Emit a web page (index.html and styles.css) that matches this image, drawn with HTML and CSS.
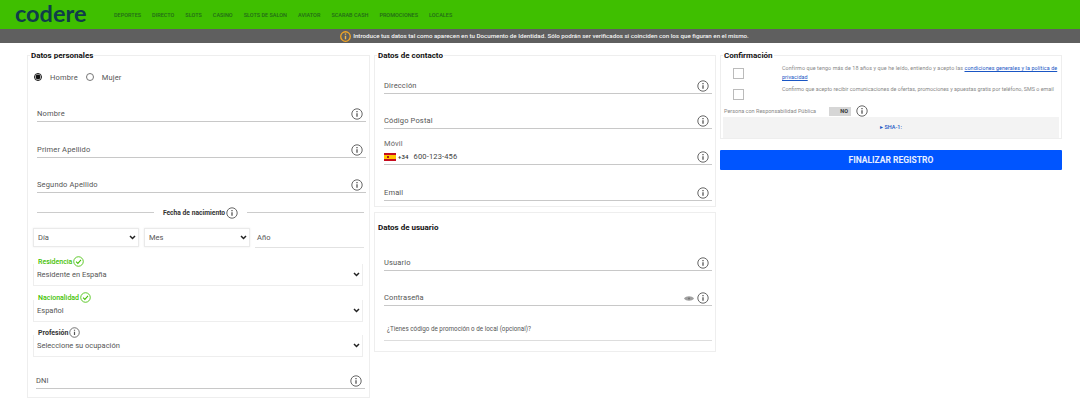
FILE: index.html
```html
<!DOCTYPE html>
<html>
<head>
  <title>Registro Codere</title>
  <link rel="stylesheet" href="styles.css">
</head>
<body>
  <svg class="icon-defs" width="0" height="0">
    <symbol id="info" viewBox="0 0 12 12">
      <circle cx="6" cy="6" r="5.2" fill="none" stroke="currentColor" stroke-width="0.9"/>
      <path d="M6 3v1.2M6 5.2v3.6" fill="none" stroke="currentColor" stroke-width="1.3"/>
    </symbol>
    <symbol id="check" viewBox="0 0 12 12">
      <circle cx="6" cy="6" r="5.2" fill="none" stroke="currentColor" stroke-width="0.9"/>
      <path d="M3.4 6.2l1.9 1.9 3.4-3.8" fill="none" stroke="currentColor" stroke-width="1.1"/>
    </symbol>
  </svg>

  <header class="topbar">
    <div class="logo">codere</div>
    <nav class="menu">
      <a>Deportes</a>
      <a>Directo</a>
      <a>Slots</a>
      <a>Casino</a>
      <a>Slots de Salon</a>
      <a>Aviator</a>
      <a>Scarab Cash</a>
      <a>Promociones</a>
      <a>Locales</a>
    </nav>
  </header>

  <div class="notice">
    <svg width="11" height="11" viewBox="0 0 12 12">
      <circle cx="6" cy="6" r="5.200" fill="none" stroke="#f5a623" stroke-width="1.400"/>
      <path d="M6 2.800v1.300M6 5.200v3.800" fill="none" stroke="#f5b84a" stroke-width="1.500"/>
    </svg>
    Introduce tus datos tal como aparecen en tu Documento de Identidad. Sólo podrán ser verificados si coinciden con los que figuran en el mismo.
  </div>

  <main class="columns">
    <fieldset class="box personal">
      <legend>Datos personales</legend>
      <div class="gender">
        <label><input type="radio" name="gender" checked> Hombre</label>
        <label><input type="radio" name="gender"> Mujer</label>
      </div>
      <div class="field first-field"><span>Nombre</span><svg class="info"><use href="#info"/></svg></div>
      <div class="field"><span>Primer Apellido</span><svg class="info"><use href="#info"/></svg></div>
      <div class="field"><span>Segundo Apellido</span><svg class="info"><use href="#info"/></svg></div>

      <div class="birth-title">
        <span class="birth-text">Fecha de nacimiento <svg class="info"><use href="#info"/></svg></span>
      </div>
      <div class="birth-row">
        <select><option>Día</option></select>
        <select><option>Mes</option></select>
        <div class="year">Año</div>
      </div>

      <fieldset class="pick valid residence">
        <legend>Residencia <svg class="info"><use href="#check"/></svg></legend>
        <select><option>Residente en España</option></select>
      </fieldset>
      <fieldset class="pick valid nationality">
        <legend>Nacionalidad <svg class="info"><use href="#check"/></svg></legend>
        <select><option>Español</option></select>
      </fieldset>
      <fieldset class="pick job">
        <legend>Profesión <svg class="info"><use href="#info"/></svg></legend>
        <select><option>Seleccione su ocupación</option></select>
      </fieldset>

      <div class="field dni"><span>DNI</span><svg class="info"><use href="#info"/></svg></div>
    </fieldset>

    <div class="middle">
      <fieldset class="box contact">
        <legend>Datos de contacto</legend>
        <div class="field"><span>Dirección</span><svg class="info"><use href="#info"/></svg></div>
        <div class="field"><span>Código Postal</span><svg class="info"><use href="#info"/></svg></div>
        <div class="mobile-label">Móvil</div>
        <div class="field mobile">
          <span class="phone">
            <svg class="flag" width="12" height="8" viewBox="0 0 12 8">
              <rect width="12" height="8" fill="#c60b1e"/>
              <rect y="2" width="12" height="4" fill="#ffc400"/>
              <rect x="3" y="3" width="2" height="2" fill="#ad1519"/>
            </svg>
            <b>+34</b> <em>600-123-456</em>
          </span>
          <svg class="info"><use href="#info"/></svg>
        </div>
        <div class="field"><span>Email</span><svg class="info"><use href="#info"/></svg></div>
      </fieldset>

      <section class="box user">
        <h3>Datos de usuario</h3>
        <div class="field"><span>Usuario</span><svg class="info"><use href="#info"/></svg></div>
        <div class="field">
          <span>Contraseña</span>
          <span class="field-icons">
            <svg class="eye" width="10" height="7" viewBox="0 0 10 7">
              <path d="M0 3.500C2 .5 8 .5 10 3.500 8 6.500 2 6.500 0 3.500z" fill="#a0a0a0"/>
              <circle cx="5" cy="3.500" r="1.100" fill="#777"/>
            </svg>
            <svg class="info"><use href="#info"/></svg>
          </span>
        </div>
        <div class="promo">¿Tienes código de promoción o de local (opcional)?</div>
      </section>
    </div>

    <div class="right">
      <fieldset class="box confirm">
        <legend>Confirmación</legend>
        <div class="terms terms-legal">
          <input type="checkbox">
          <p>Confirmo que tengo más de 18 años y que he leído, entiendo y acepto las <a>condiciones generales y la política de privacidad</a></p>
        </div>
        <div class="terms">
          <input type="checkbox">
          <p>Confirmo que acepto recibir comunicaciones de ofertas, promociones y apuestas gratis por teléfono, SMS o email</p>
        </div>
        <div class="public-row">
          <span class="public-label">Persona con Responsabilidad Pública</span>
          <span class="toggle">NO</span>
          <svg class="info"><use href="#info"/></svg>
        </div>
        <div class="sha">▸ SHA-1:</div>
      </fieldset>
      <button class="finish">FINALIZAR REGISTRO</button>
    </div>
  </main>
</body>
</html>
```

FILE: styles.css
```css
body {
  margin: 0;
  font-family: Roboto, Arial, sans-serif;
  font-size: 7.500px;
  color: #555;
  background: #fff;
  overflow: hidden;
}

.icon-defs {
  display: block;
  height: 0;
}

.topbar {
  height: 29px;
  background: #3fbf00;
  display: flex;
  align-items: center;
}

.logo {
  width: 114px;
  padding-left: 15px;
  box-sizing: border-box;
  font-family: Lato, sans-serif;
  font-weight: 700;
  font-size: 23.500px;
  line-height: 27px;
  height: 29px;
  color: #0f3d4a;
}

.menu {
  display: flex;
  gap: 11px;
  font-size: 5.500px;
  font-weight: 500;
  text-transform: uppercase;
  color: #236b18;
}

.notice {
  height: 14px;
  background: #5f5f5f;
  color: #f4f4f4;
  font-size: 6.200px;
  font-weight: 500;
  display: flex;
  align-items: center;
  justify-content: center;
  gap: 2px;
  padding-left: 9px;
}

.columns {
  display: grid;
  grid-template-columns: 343px 342px 342px;
  gap: 4px;
  padding: 7px 0 0 27px;
}

.box {
  margin: 0;
  padding: 0;
  min-width: 0;
  border: 1px solid #eee;
  box-sizing: border-box;
}

.box > legend {
  margin-left: 2px;
  padding: 0 1px;
  font-size: 8px;
  font-weight: 700;
  line-height: 11px;
  color: #111;
}

.info {
  width: 12px;
  height: 12px;
  color: #555;
  flex: none;
}

.field {
  height: 35.300px;
  box-sizing: border-box;
  margin: 0 3px 0 9px;
  border-bottom: 1.500px solid #c8c8c8;
  padding: 0 3px 1px 0;
  display: flex;
  align-items: flex-end;
  justify-content: space-between;
  letter-spacing: 0.15px;
}

.field span {
  padding-bottom: 2px;
}

.personal {
  height: 348px;
}

.gender {
  display: flex;
  gap: 8px;
  padding: 9px 0 0 6px;
  height: 14px;
  align-items: center;
  letter-spacing: 0.15px;
}

.gender label {
  display: flex;
  align-items: center;
  gap: 8px;
}

.gender input {
  width: 8px;
  height: 8px;
  margin: 0;
  accent-color: #111;
}

.first-field {
  margin-top: 3px;
}

.birth-title {
  margin: 14px 5px 0 9px;
  display: flex;
  align-items: center;
  gap: 9px;
}

.birth-title::before,
.birth-title::after {
  content: "";
  flex: 1;
  height: 1px;
  background: #ccc;
}

.birth-text {
  display: flex;
  align-items: center;
  gap: 1px;
  font-size: 6.700px;
  font-weight: 700;
  color: #333;
}

.birth-row {
  display: flex;
  gap: 5px;
  margin: 9px 5px 0 5px;
}

select {
  appearance: none;
  font: inherit;
  color: #555;
  height: 19px;
  padding: 0 0 0 4px;
  border: 1px solid #eaeaea;
  border-radius: 0;
  background: #fff url("data:image/svg+xml,%3Csvg xmlns='http://www.w3.org/2000/svg' width='7' height='5'%3E%3Cpath d='M1 1l2.500 2.500L6 1' fill='none' stroke='%23222' stroke-width='1.500'/%3E%3C/svg%3E") no-repeat right 2px center;
  box-shadow: 0 0 2px rgba(0, 0, 0, 0.08);
}

.birth-row select {
  width: 106px;
}

.year {
  flex: 1;
  border-bottom: 1px solid #e2e2e2;
  padding-left: 2px;
  line-height: 19px;
  letter-spacing: 0.15px;
}

.pick {
  margin: 0 6px 0 5px;
  padding: 0;
  border: 1px solid #eee;
  min-width: 0;
}

.pick legend {
  padding: 0 2px 4px 0;
  margin: 0 0 -8px 4px;
  display: flex;
  align-items: center;
  gap: 1px;
  font-size: 7px;
  font-weight: 700;
  line-height: 11px;
  color: #333;
}

.pick .info {
  width: 11px;
  height: 11px;
  margin-top: -1px;
}

.pick.valid legend {
  color: #3fbf00;
  font-weight: 500;
}

.pick.valid .info {
  color: #3fbf00;
}

.pick select {
  display: block;
  width: 100%;
  height: 21px;
  padding-left: 3px;
  border: 0;
  box-shadow: none;
}

.residence {
  margin-top: 9px;
}

.nationality {
  margin-top: 7px;
}

.job {
  margin-top: 6px;
}

.dni {
  margin: 0 4px 0 8px;
  height: 32px;
}

.middle {
  display: flex;
  flex-direction: column;
  gap: 5px;
}

.contact {
  height: 157px;
}

.contact legend + .field {
  height: 33px;
}

.mobile-label {
  margin: 10px 0 0 9px;
  height: 11px;
  letter-spacing: 0.15px;
  color: #666;
}

.contact .mobile {
  height: 15px;
}

.phone {
  display: flex;
  align-items: center;
  gap: 2px;
}

.phone b {
  font-size: 6px;
  font-weight: 500;
  color: #333;
}

.phone em {
  font-style: normal;
  margin-left: 3px;
  color: #444;
}

.user {
  height: 140px;
}

.user h3 {
  margin: 0;
  padding: 9px 0 0 3px;
  font-size: 8px;
  font-weight: 700;
  line-height: 11px;
  color: #111;
}

.user .field:first-of-type {
  height: 38px;
}

.field .field-icons {
  display: flex;
  align-items: center;
  gap: 3px;
  padding: 0;
}

.promo {
  margin: 0 3px 0 9px;
  height: 35px;
  padding: 19px 0 0 3px;
  box-sizing: border-box;
  border-bottom: 1px solid #ddd;
  font-size: 6.300px;
  color: #555;
}

.right {
  display: flex;
  flex-direction: column;
  gap: 11px;
}

.confirm {
  height: 89px;
  padding-top: 1px;
}

.terms {
  display: flex;
  height: 21px;
}

.terms input {
  appearance: none;
  width: 11px;
  height: 11px;
  margin: 6px 38px 0 12px;
  border: 1px solid #bbb;
  background: #fff;
}

.terms p {
  margin: 2px 0 0 0;
  width: 279px;
  font-size: 5.400px;
  line-height: 9px;
  color: #888;
}

.terms-legal p {
  letter-spacing: 0.09px;
}

.terms a {
  color: #1a56c4;
  text-decoration: underline;
}

.public-row {
  display: flex;
  align-items: center;
  height: 12px;
  margin: 1px 0 0 3px;
  font-size: 5.500px;
  color: #888;
}

.public-label {
  width: 105px;
}

.toggle {
  width: 22px;
  height: 9px;
  box-sizing: border-box;
  padding-right: 3px;
  margin-right: 5px;
  background: #d6d6d6;
  color: #333;
  font-size: 5.500px;
  font-weight: 700;
  line-height: 9px;
  text-align: right;
}

.sha {
  height: 21px;
  margin: 0 2px;
  background: #f3f3f3;
  text-align: center;
  line-height: 21px;
  font-size: 5.500px;
  font-weight: 500;
  color: #1a56c4;
}

.finish {
  width: 342px;
  height: 20px;
  border: 0;
  border-radius: 1px;
  background: #0055ff;
  color: #e8f0ff;
  font-family: Roboto, Arial, sans-serif;
  font-size: 8.500px;
  font-weight: 700;
}
```
